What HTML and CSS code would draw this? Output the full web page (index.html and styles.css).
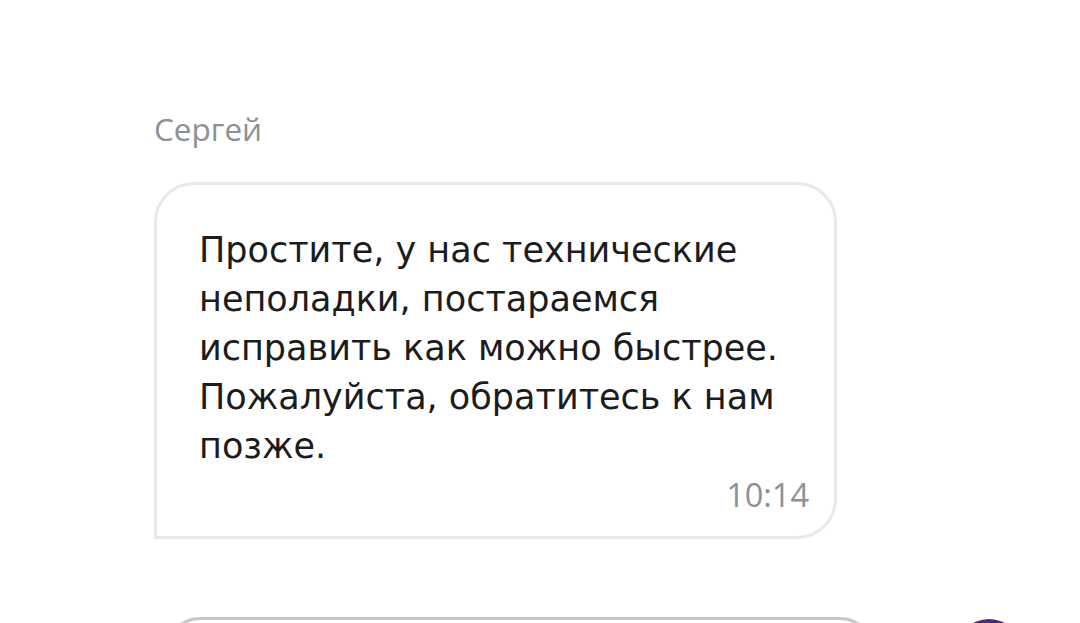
FILE: index.html
```html
<!DOCTYPE html>
<html lang="ru">
<head>
<meta charset="utf-8">
<link rel="stylesheet" href="styles.css">
</head>
<body>
<div class="chat">
  <div class="message">
    <div class="author">Сергей</div>
    <div class="bubble">
      <p class="text">Простите, у нас технические неполадки, постараемся исправить как можно быстрее. Пожалуйста, обратитесь к нам позже.</p>
      <div class="time">10:14</div>
    </div>
  </div>
  <div class="composer">
    <div class="input"></div>
    <div class="send"></div>
  </div>
</div>
</body>
</html>
```

FILE: styles.css
```css
html, body {
  margin: 0;
  padding: 0;
  background: #ffffff;
  height: 100%;
  overflow: hidden;
}

.chat {
  padding: 111px 0 0 154px;
  display: flex;
  flex-direction: column;
}

.message {
  display: flex;
  flex-direction: column;
}

.author {
  font-family: "Open Sans", sans-serif;
  font-size: 31.5px;
  line-height: 36px;
  color: #8c9195;
  margin: 0 0 35px 0;
}

.bubble {
  width: 683px;
  box-sizing: border-box;
  border: 3px solid #e6eaec;
  border-radius: 40px 40px 40px 0;
  padding: 41px 25px 22px 42px;
}

.text {
  margin: 0;
  font-family: "DejaVu Sans", sans-serif;
  font-size: 35px;
  line-height: 49px;
  color: #1c1c1c;
  width: 600px;
}

.time {
  font-family: "Open Sans", sans-serif;
  font-size: 32.5px;
  line-height: 38px;
  color: #8c9195;
  text-align: right;
  margin-top: 5px;
}

.composer {
  display: flex;
  align-items: flex-start;
  margin-top: 78px;
  padding-left: 11px;
}

.input {
  width: 710px;
  height: 70px;
  box-sizing: border-box;
  border: 3px solid #c5c7c6;
  border-radius: 35px;
}

.send {
  width: 66px;
  height: 66px;
  border-radius: 50%;
  background: #4b2b72;
  margin-left: 81px;
  margin-top: 2px;
}
```
